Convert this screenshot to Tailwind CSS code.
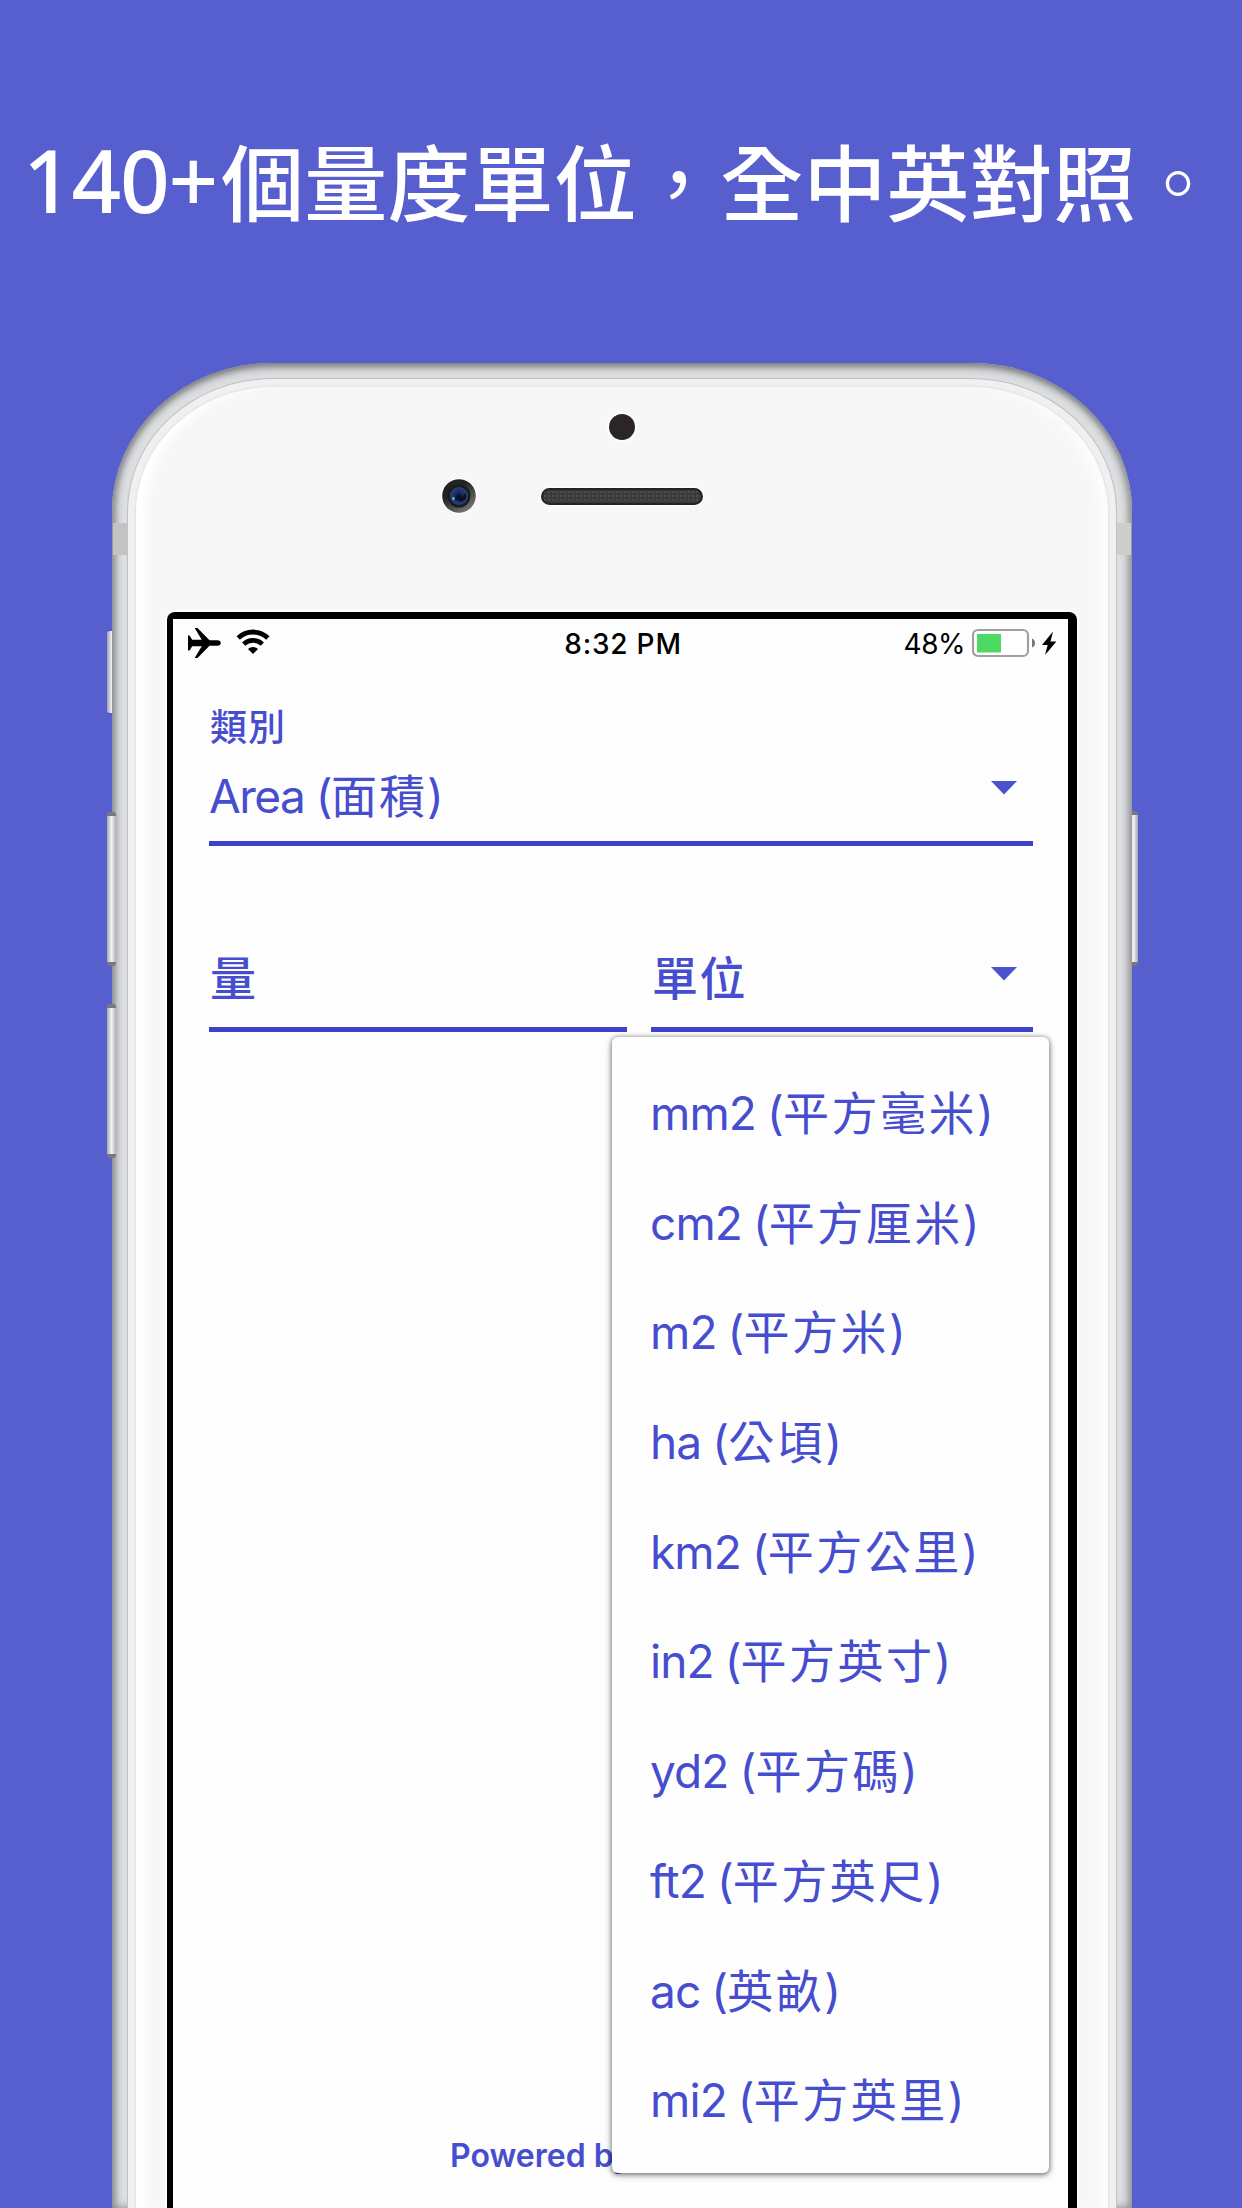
<!DOCTYPE html>
<html lang="zh-Hant">
<head>
<meta charset="utf-8">
<title>量度單位</title>
<script src="https://cdn.jsdelivr.net/npm/@tailwindcss/browser@4"></script>
</head>
<body class="w-[1242px] h-[2208px] overflow-hidden bg-[#575fce] flex flex-col font-['Inter','Noto_Sans_CJK_TC',sans-serif]">
  <h1 class="h-[363px] shrink-0 pl-[23px] pt-[119px] flex items-start whitespace-nowrap text-white font-medium text-[83px] leading-[120px] font-['Noto_Sans_CJK_TC',sans-serif]"><span class="w-[198px] text-[87px] tracking-[-1.300px] font-['Noto_Sans',sans-serif]">140+</span><span class="tracking-[0.200px]">個量度單位<span class="font-normal">，</span>全中英對照<span class="font-light">。</span></span></h1>

  <!-- Phone -->
  <div class="relative mx-[112px] w-[1020px] h-[1845px] shrink-0">
    <div class="absolute left-[-5px] top-[268px] w-[9px] h-[82px] rounded-l-[3px] bg-linear-to-r from-[#9fa1ad] via-[#eeeef2] to-[#b5b7bb]"></div>
    <div class="absolute right-[-6px] top-[448px] w-[9px] h-[155px] rounded-[3px] border-y-4 border-[#77787c] bg-linear-to-l from-[#a5a7ad] via-[#f4f4f6] to-[#b0b1b4]"></div>

    <div class="relative h-full rounded-t-[160px_148px] bg-[#dcdee0] px-[15px] pt-[15px] shadow-[inset_0_8px_8px_-5px_#77797c,inset_6px_0_7px_-3px_#8b8d90,inset_-6px_0_7px_-3px_#96989b,inset_0_0_10px_1px_#a6a8ab]">
      <div class="absolute left-0 top-[160px] w-[15px] h-[32px] bg-[#c3c3c3] border-l border-[#999]"></div>
      <div class="absolute right-0 top-[160px] w-[15px] h-[32px] bg-[#cdcdcb] border-r border-[#999]"></div>
      <div class="h-full rounded-t-[146px_134px] bg-[#f0f0f1] border-x border-t border-[#bfc0c3] px-[8px] pt-[8px]">
        <div class="h-full rounded-t-[138px_126px] bg-[#f7f7f7] shadow-[0_0_2px_1px_#e0e0e1,inset_14px_0_8px_-4px_#fff,inset_-14px_0_8px_-4px_#fcfcfc] pl-[31px] pr-[31px] flex flex-col">
          <!-- Sensor, camera and speaker -->
          <div class="h-[225px] shrink-0 flex flex-col items-center pt-[27px]">
            <div class="size-[26px] rounded-full bg-[#2b2625] shadow-[0_0_2px_2px_#fff]"></div>
            <div class="mt-[38px] w-full pl-[274px] flex items-center">
              <svg class="size-[36px]" viewBox="0 0 36 36">
                <defs>
                  <linearGradient id="ring" x1="0" y1="0" x2=".7" y2="1"><stop offset=".4" stop-color="#222"/><stop offset="1" stop-color="#777"/></linearGradient>
                  <radialGradient id="lens"><stop offset="0" stop-color="#0d1433"/><stop offset=".55" stop-color="#1c3166"/><stop offset="1" stop-color="#28407d"/></radialGradient>
                </defs>
                <circle cx="18" cy="18" r="18" fill="#fff"/>
                <circle cx="18" cy="18" r="16.8" fill="url(#ring)"/>
                <circle cx="18" cy="18" r="11.5" fill="#1c1c1e"/>
                <circle cx="18" cy="18" r="9" fill="url(#lens)"/>
                <path d="M12 21l6-4 3 2 4-4v6l-5 3-4-2z" fill="#0b1028"/>
                <circle cx="12.500" cy="20.500" r="1.500" fill="#6ea6dd"/>
              </svg>
              <div class="ml-[64px] w-[162px] h-[17px] rounded-full border-2 border-[#222423] bg-[#383b3a] shadow-[0_0_2px_1px_#fff] bg-[radial-gradient(#4b4e4d_1px,transparent_1.500px)] bg-size-[4px_4px]"></div>
            </div>
          </div>

          <!-- Screen -->
          <div class="relative flex-1 rounded-t-[8px] bg-black pl-[6px] pr-[9px] pt-[7px] shadow-[0_0_1px_2px_#fff]">
            <div class="relative h-full bg-[#fefefe] text-[#464ecf]">
              <div class="h-[52px] pl-[14px] pr-[12px] pt-[8px] grid grid-cols-[1fr_auto_1fr] items-start text-black text-[28px] leading-[34px]">
                <div class="flex gap-[15px]">
                  <svg class="w-[34px] h-[32px]" viewBox="0 0 34 32"><path d="M1 8.500h1.600l2.600 4.200h9.500L7.700 1h2.800l12 12.200h8c2 0 3.300 1.200 3.300 2.800s-1.300 2.800-3.300 2.800h-8L10.500 31H7.700l7-11.700H5.200L2.600 23.500H1z"/></svg>
                  <svg class="w-[34px] h-[32px]" viewBox="0 0 34 32" fill="none" stroke="#000"><path d="M2.200 11a21.300 21.300 0 0 1 29.600 0" stroke-width="4.800"/><path d="M7.700 17.100a13.500 13.500 0 0 1 18.600 0" stroke-width="4.600"/><path d="M17 27l-5-5a7.200 7.200 0 0 1 10 0z" fill="#000" stroke="none"/></svg>
                </div>
                <div class="pl-[3px] font-medium tracking-[0.800px]">8:32 PM</div>
                <div class="flex justify-end">
                  <span class="mr-[7px] tracking-[-0.500px]">48%</span>
                  <svg class="w-[84px] h-[32px]" viewBox="0 0 84 32"><rect x="1" y="3" width="55" height="26" rx="5" fill="#fff" stroke="#a0a0a0" stroke-width="2.200"/><rect x="5" y="7" width="24" height="18.500" fill="#4cd964"/><path d="M60 11.500q3 1 3 4.500t-3 4.500z" fill="#777"/><path d="M81 4.500L70 18h5.700L73 28l11.500-13.500h-6z"/></svg>
                </div>
              </div>

              <div class="pl-[36px] pr-[35px]">
                <div class="h-[175px] border-b-5 border-[#3c43ca] flex flex-col">
                  <div class="mt-[32px] h-[50px] pl-[1px] text-[37px] leading-[50px] font-medium tracking-[1px]">類別</div>
                  <div class="mt-[13px] flex justify-between">
                    <div class="text-[46px] leading-[60px] tracking-[-1.500px]">Area (<span class="tracking-[2px]">面積</span>)</div>
                    <svg class="mr-[15px] mt-[15px] w-[28px] h-[14px]" viewBox="0 0 28 14"><path d="M1 0h26L14 13.500z" fill="#4a52d0"/></svg>
                  </div>
                </div>
                <div class="mt-[86px] h-[100px] flex gap-[24px] text-[46px] leading-[60px] font-medium">
                  <div class="w-[418px] border-b-5 border-[#3c43ca] pl-[1px] pt-[16px]">量</div>
                  <div class="flex-1 border-b-5 border-[#3c43ca] pl-[1px] pt-[16px] flex justify-between">
                    <div class="tracking-[1.500px]">單位</div>
                    <svg class="mr-[15px] mt-[19px] w-[28px] h-[14px]" viewBox="0 0 28 14"><path d="M1 0h26L14 13.500z" fill="#4a52d0"/></svg>
                  </div>
                </div>
              </div>

              <div class="absolute left-[277px] top-[1515px] text-[32px] leading-[44px] font-semibold whitespace-nowrap">Powered by</div>

              <!-- Unit menu -->
              <div class="absolute left-[439px] top-[418px] w-[437px] h-[1136px] rounded-[6px] bg-[#fefefe] shadow-[0_1px_4px_1px_#00000066,0_2px_10px_0_#00000033] pl-[38px] pt-[22px] text-[46px] tracking-[-0.900px] [word-spacing:-1px] [&_span]:tracking-[2.500px]">
                <div class="h-[109.700px] leading-[109px]">mm2 (<span>平方毫米</span>)</div>
                <div class="h-[109.700px] leading-[109px]">cm2 (<span>平方厘米</span>)</div>
                <div class="h-[109.700px] leading-[109px]">m2 (<span>平方米</span>)</div>
                <div class="h-[109.700px] leading-[109px]">ha (<span>公頃</span>)</div>
                <div class="h-[109.700px] leading-[109px]">km2 (<span>平方公里</span>)</div>
                <div class="h-[109.700px] leading-[109px]">in2 (<span>平方英寸</span>)</div>
                <div class="h-[109.700px] leading-[109px]">yd2 (<span>平方碼</span>)</div>
                <div class="h-[109.700px] leading-[109px]">ft2 (<span>平方英尺</span>)</div>
                <div class="h-[109.700px] leading-[109px]">ac (<span>英畝</span>)</div>
                <div class="h-[109.700px] leading-[109px]">mi2 (<span>平方英里</span>)</div>
              </div>
            </div>
          </div>
        </div>
      </div>
    </div>

    <!-- Volume buttons overlap the frame edge -->
    <div class="absolute left-[-5px] top-[449px] w-[9px] h-[154px] rounded-[3px] border-y-4 border-[#77787c] bg-linear-to-r from-[#a5a7ad] via-[#f4f4f6] to-[#b0b1b4]"></div>
    <div class="absolute left-[-5px] top-[641px] w-[9px] h-[154px] rounded-[3px] border-y-4 border-[#77787c] bg-linear-to-r from-[#a5a7ad] via-[#f4f4f6] to-[#b0b1b4]"></div>
  </div>
</body>
</html>
